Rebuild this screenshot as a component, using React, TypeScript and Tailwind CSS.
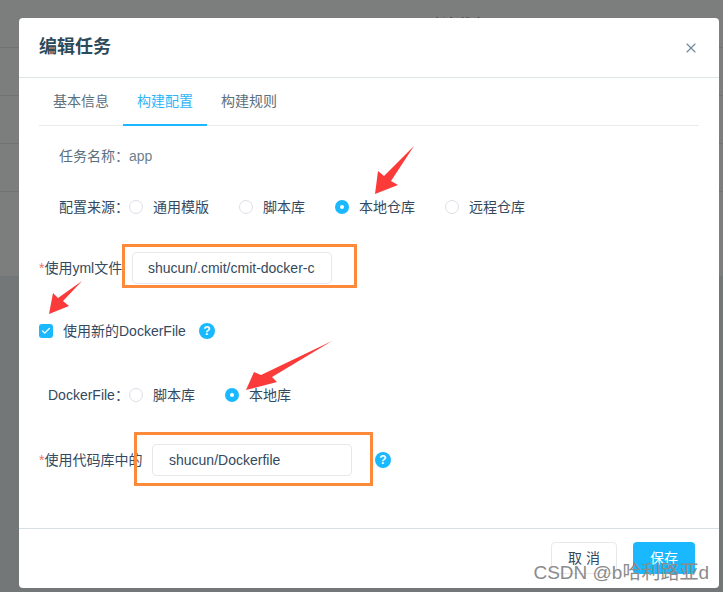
import React from 'react';
import { X, Check } from 'lucide-react';

const CJK = "font-['Liberation_Sans','Noto_Sans_CJK_SC',sans-serif]";

function Radio({ label, checked, className }: { label: string; checked?: boolean; className: string }) {
  return (
    <label className={`flex items-center ${className}`}>
      {checked ? (
        <span className="w-[14px] h-[14px] rounded-full bg-[#1ab8ff] flex items-center justify-center shrink-0">
          <span className="w-[4px] h-[4px] rounded-full bg-white" />
        </span>
      ) : (
        <span className="w-[14px] h-[14px] rounded-full border border-[#dcdfe6] bg-white shrink-0" />
      )}
      <span className="ml-[10px] text-[14px] text-[#34495e] whitespace-nowrap">{label}</span>
    </label>
  );
}

function Help({ className }: { className: string }) {
  return (
    <span className={`w-[16px] h-[16px] rounded-full bg-[#1ab8ff] text-white text-[12px] font-bold flex items-center justify-center shrink-0 ${className}`}>
      ?
    </span>
  );
}

function RedArrow({ className, d, w, h }: { className: string; d: string; w: number; h: number }) {
  return (
    <svg className={`absolute ${className}`} width={w} height={h} viewBox={`0 0 ${w} ${h}`}>
      <path d={d} fill="#fb3a3a" />
    </svg>
  );
}

export default function App() {
  return (
    <div className={`relative w-[723px] h-[592px] overflow-hidden bg-[#7c7d7d] pt-[18px] pl-[19px] ${CJK}`}>
      {/* page behind the overlay */}
      <div className="absolute left-0 top-0 w-full h-[276px] flex flex-col pt-[47px] gap-[47px]">
        <div className="h-px bg-[#717272]" />
        <div className="h-px bg-[#717272]" />
        <div className="h-px bg-[#717272]" />
        <div className="h-px bg-[#717272]" />
      </div>
      <div className="absolute left-0 top-[276px] w-full h-[316px] bg-[#747778]" />
      <div className="absolute left-[433px] top-[16px] text-[13px] leading-[16px] text-[#333]">任务状态</div>

      <div className="relative w-[700px] h-[570px] bg-white rounded-[4px] flex flex-col">
        <div className="h-[60px] border-b border-[#dce4e6] flex items-center justify-between pl-[20px] pr-[20px] shrink-0">
          <span className="text-[18px] font-bold text-[#2c4a5a]">编辑任务</span>
          <X className="w-[16px] h-[16px] text-[#71899b]" strokeWidth={1.75} />
        </div>

        <div className="flex-1 px-[20px] min-h-0">
          <div className="flex h-[48px] border-b border-[#e9eced] text-[14px] text-[#5c6f7c]">
            <span className="w-[84px] flex items-center justify-center">基本信息</span>
            <span className="w-[84px] flex items-center justify-center text-[#30b4f8] border-b-2 border-[#1ab8ff] h-[48px]">构建配置</span>
            <span className="w-[84px] flex items-center justify-center">构建规则</span>
          </div>

          <div className="flex items-center h-[20px] mt-[20px] pl-[20px] text-[14px] text-[#5c7180]">
            <span>任务名称：</span>
            <span className="text-[#6f8290]">app</span>
          </div>

          <div className="flex items-center h-[20px] mt-[31px] pl-[20px] text-[14px] text-[#34495e]">
            <span className="w-[70px] whitespace-nowrap">配置来源：</span>
            <Radio label="通用模版" className="w-[110px]" />
            <Radio label="脚本库" className="w-[96px]" />
            <Radio label="本地仓库" checked className="w-[110px]" />
            <Radio label="远程仓库" className="w-[96px]" />
          </div>

          <div className="flex items-center h-[32px] mt-[35px] text-[14px] text-[#34495e]">
            <span className="w-[93px] whitespace-nowrap"><span className="text-[#f56c6c]">*</span>使用yml文件</span>
            <div className="w-[200px] h-[32px] border border-[#e6e9ec] rounded-[4px] pl-[15px] flex items-center text-[14px] text-[#34495e] overflow-hidden whitespace-nowrap">
              <span className="w-[167px] overflow-hidden">shucun/.cmit/cmit-docker-compose.yml</span>
            </div>
          </div>

          <div className="flex items-center h-[20px] mt-[37px] text-[14px] text-[#34495e]">
            <span className="w-[14px] h-[14px] rounded-[3px] bg-[#1ab8ff] flex items-center justify-center">
              <Check className="w-[10px] h-[10px] text-white" strokeWidth={3} />
            </span>
            <span className="ml-[10px]">使用新的DockerFile</span>
            <Help className="ml-[13px]" />
          </div>

          <div className="flex items-center h-[20px] mt-[44px] pl-[9px] text-[14px] text-[#34495e]">
            <span className="w-[81px] whitespace-nowrap">DockerFile：</span>
            <Radio label="脚本库" className="w-[96px]" />
            <Radio label="本地库" checked className="w-[96px]" />
          </div>

          <div className="flex items-center h-[32px] mt-[39px] text-[14px] text-[#34495e]">
            <span className="w-[113px] whitespace-nowrap"><span className="text-[#f56c6c]">*</span>使用代码库中的</span>
            <div className="w-[200px] h-[32px] border border-[#e6e9ec] rounded-[4px] pl-[16px] flex items-center text-[14px] text-[#34495e]">shucun/Dockerfile</div>
            <Help className="ml-[23px]" />
          </div>
        </div>

        <div className="h-[60px] border-t border-[#d7e0e3] flex justify-end gap-[16px] pt-[13px] pr-[24px] shrink-0">
          <button className="w-[66px] h-[32px] border border-[#e6e9ec] rounded-[4px] text-[14px] text-[#34495e] bg-white">取 消</button>
          <button className="w-[62px] h-[32px] rounded-[4px] text-[14px] text-white bg-[#1ab8ff]">保存</button>
        </div>
      </div>

      {/* annotations drawn over the screenshot */}
      <div className="absolute left-[122px] top-[244px] w-[235px] h-[44px] border-[3px] border-[#fd8a3b]" />
      <div className="absolute left-[134px] top-[432px] w-[239px] h-[54px] border-[3px] border-[#fd8a3b]" />
      <RedArrow className="left-[370px] top-[144px]" w={46} h={52} d="M44 2 L21 37 L28 41 L5 50 L8 27 L14 32 Z" />
      <RedArrow className="left-[46px] top-[280px]" w={38} h={36} d="M36 1 L17 21 L23 26 L3 34 L7 13 L12 18 Z" />
      <RedArrow className="left-[244px] top-[340px]" w={90} h={52} d="M88 1 L28 37 L33 42 L2 50 L10 32 L17 35 Z" />

      <div className="absolute right-[14px] bottom-[6px] text-[19px] leading-[26px] text-[#8b8b8b] whitespace-nowrap">CSDN @b哈利路亚d</div>
    </div>
  );
}
